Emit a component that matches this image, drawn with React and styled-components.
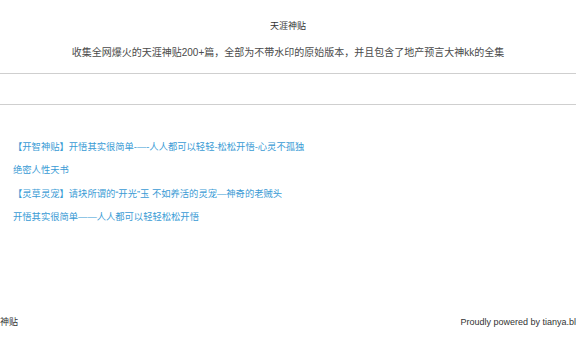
import React from "react";
import styled, { createGlobalStyle } from "styled-components";

const GlobalStyle = createGlobalStyle`
  html, body {
    margin: 0;
    padding: 0;
    background: #fff;
    overflow: hidden;
  }
  body {
    font-family: "Liberation Sans", "Noto Sans CJK SC", sans-serif;
    color: #333;
  }
`;

const Header = styled.header`
  padding: 19px 0 12px;
  text-align: center;
  border-bottom: 1px solid #cfcfcf;
`;

const Title = styled.h1`
  margin: 0;
  font-size: 9px;
  line-height: 14px;
  font-weight: normal;
  color: #333;
`;

const Description = styled.p`
  margin: 12px 0 0;
  font-size: 10px;
  line-height: 16px;
  color: #4a4a4a;
`;

const Nav = styled.nav`
  height: 30px;
  border-bottom: 1px solid #cfcfcf;
`;

const PostList = styled.ul`
  list-style: none;
  margin: 0;
  padding: 31px 0 0 13px;
`;

const PostItem = styled.li`
  line-height: 23.4px;
  font-size: 9.3px;
`;

const PostLink = styled.a`
  color: #3a9bd5;
  text-decoration: none;
`;

const Footer = styled.footer`
  display: flex;
  justify-content: space-between;
  align-items: center;
  margin: 85px 0 0 -18px;
  width: calc(100% + 28px);
  font-size: 9px;
  line-height: 14px;
  color: #333;
`;

const posts = [
  "【开智神贴】开悟其实很简单-—-人人都可以轻轻-松松开悟-心灵不孤独",
  "绝密人性天书",
  "【灵草灵宠】请块所谓的“开光”玉 不如养活的灵宠—神奇的老贼头",
  "开悟其实很简单——人人都可以轻轻松松开悟",
];

export default function App() {
  return (
    <>
      <GlobalStyle />
      <Header>
        <Title>天涯神贴</Title>
        <Description>
          收集全网爆火的天涯神贴200+篇，全部为不带水印的原始版本，并且包含了地产预言大神kk的全集
        </Description>
      </Header>
      <Nav />
      <PostList>
        {posts.map((p) => (
          <PostItem key={p}>
            <PostLink href="#">{p}</PostLink>
          </PostItem>
        ))}
      </PostList>
      <Footer>
        <span>天涯神贴</span>
        <span>Proudly powered by tianya.blog</span>
      </Footer>
    </>
  );
}
